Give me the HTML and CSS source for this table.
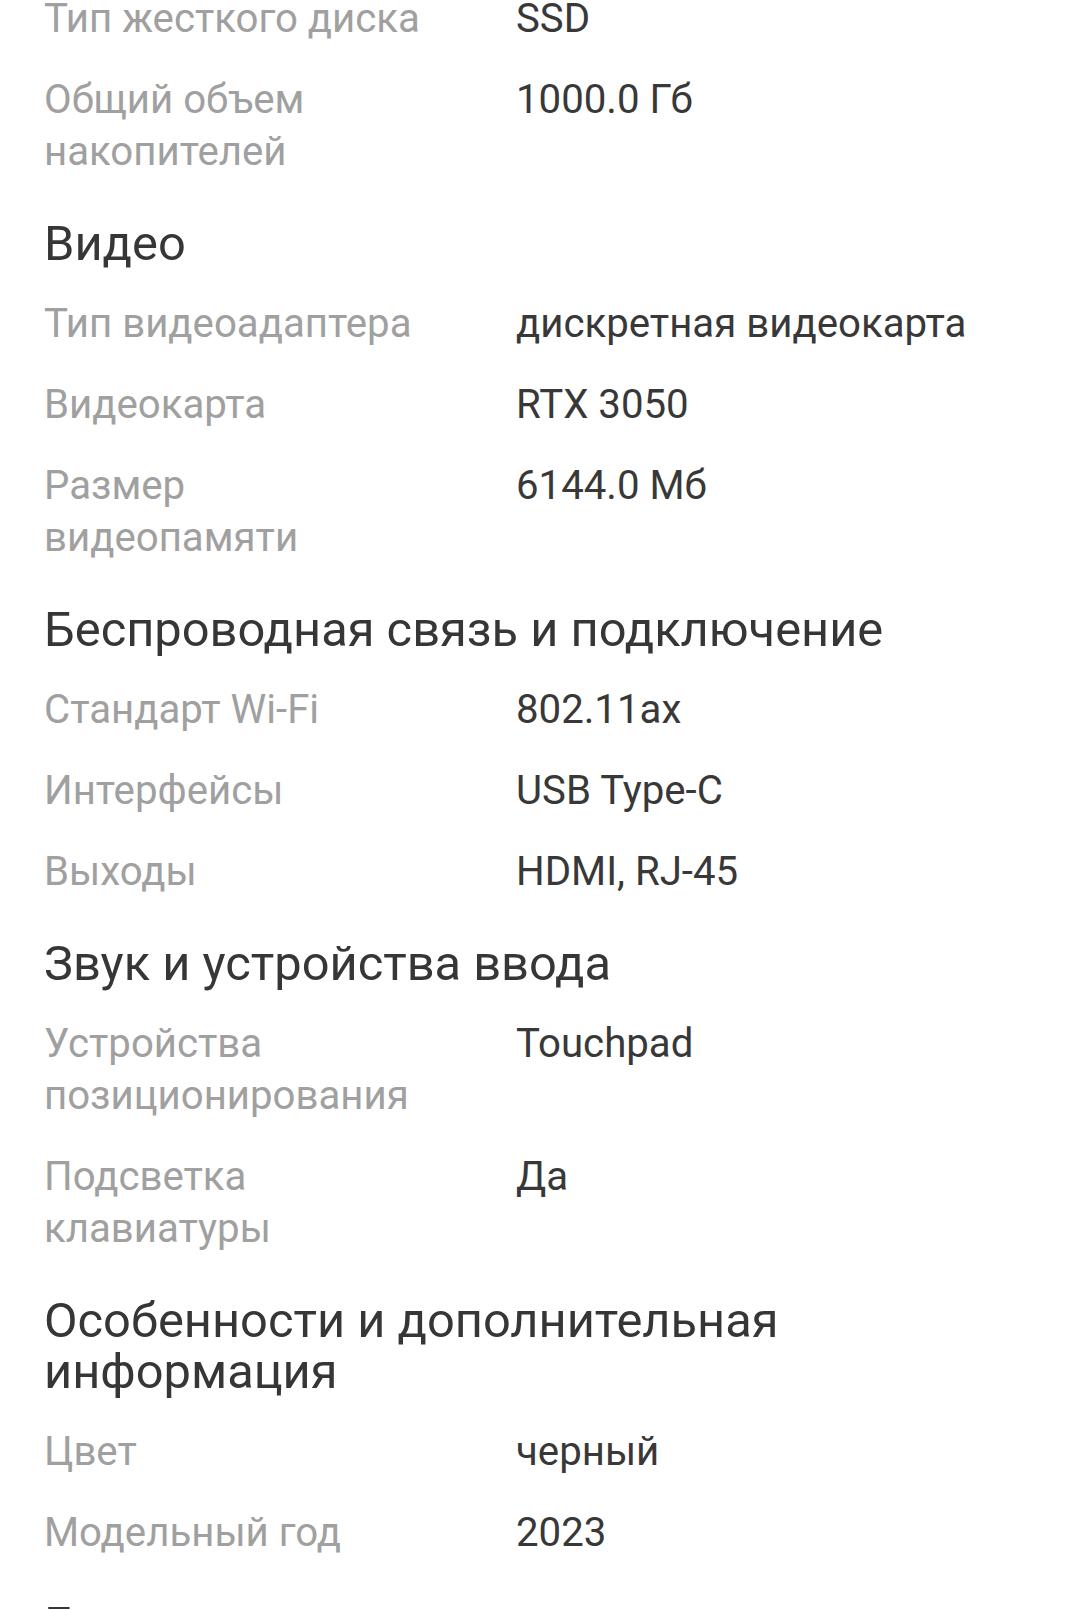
FILE: index.html
```html
<!DOCTYPE html>
<html lang="ru">
<head>
<meta charset="utf-8">
<title>Характеристики</title>
<link rel="stylesheet" href="styles.css">
</head>
<body>
<main class="specs">
  <section class="group">
    <div class="row"><div class="label">Тип жесткого диска</div><div class="value">SSD</div></div>
    <div class="row"><div class="label">Общий объем накопителей</div><div class="value">1000.0 Гб</div></div>
  </section>
  <section class="group">
    <h2 class="heading">Видео</h2>
    <div class="row"><div class="label">Тип видеоадаптера</div><div class="value">дискретная видеокарта</div></div>
    <div class="row"><div class="label">Видеокарта</div><div class="value">RTX 3050</div></div>
    <div class="row"><div class="label">Размер видеопамяти</div><div class="value">6144.0 Мб</div></div>
  </section>
  <section class="group">
    <h2 class="heading">Беспроводная связь и подключение</h2>
    <div class="row"><div class="label">Стандарт Wi-Fi</div><div class="value">802.11ax</div></div>
    <div class="row"><div class="label">Интерфейсы</div><div class="value">USB Type-C</div></div>
    <div class="row"><div class="label">Выходы</div><div class="value">HDMI, RJ-45</div></div>
  </section>
  <section class="group">
    <h2 class="heading">Звук и устройства ввода</h2>
    <div class="row"><div class="label">Устройства позиционирования</div><div class="value">Touchpad</div></div>
    <div class="row"><div class="label">Подсветка клавиатуры</div><div class="value">Да</div></div>
  </section>
  <section class="group">
    <h2 class="heading">Особенности и дополнительная информация</h2>
    <div class="row"><div class="label">Цвет</div><div class="value">черный</div></div>
    <div class="row"><div class="label">Модельный год</div><div class="value">2023</div></div>
  </section>
  <section class="group">
    <h2 class="heading">Гарантия</h2>
  </section>
</main>
</body>
</html>
```

FILE: styles.css
```css
html, body {
  margin: 0;
  padding: 0;
  background: #ffffff;
}
body {
  font-family: Roboto, "Noto Sans", "Liberation Sans", sans-serif;
  color: #383838;
  overflow: hidden;
}
.specs {
  margin-top: -7px;
  padding: 0 44px;
  display: flex;
  flex-direction: column;
  gap: 40px;
}
.group {
  display: flex;
  flex-direction: column;
  gap: 29px;
}
.heading {
  margin: 0;
  font-size: 48.8px;
  font-weight: 400;
  line-height: 51px;
  color: #363636;
}
.row {
  display: grid;
  grid-template-columns: 400px 1fr;
  column-gap: 72px;
  font-size: 40.2px;
  line-height: 52px;
}
.label {
  color: #a0a0a0;
}
.value {
  color: #383838;
}
```
